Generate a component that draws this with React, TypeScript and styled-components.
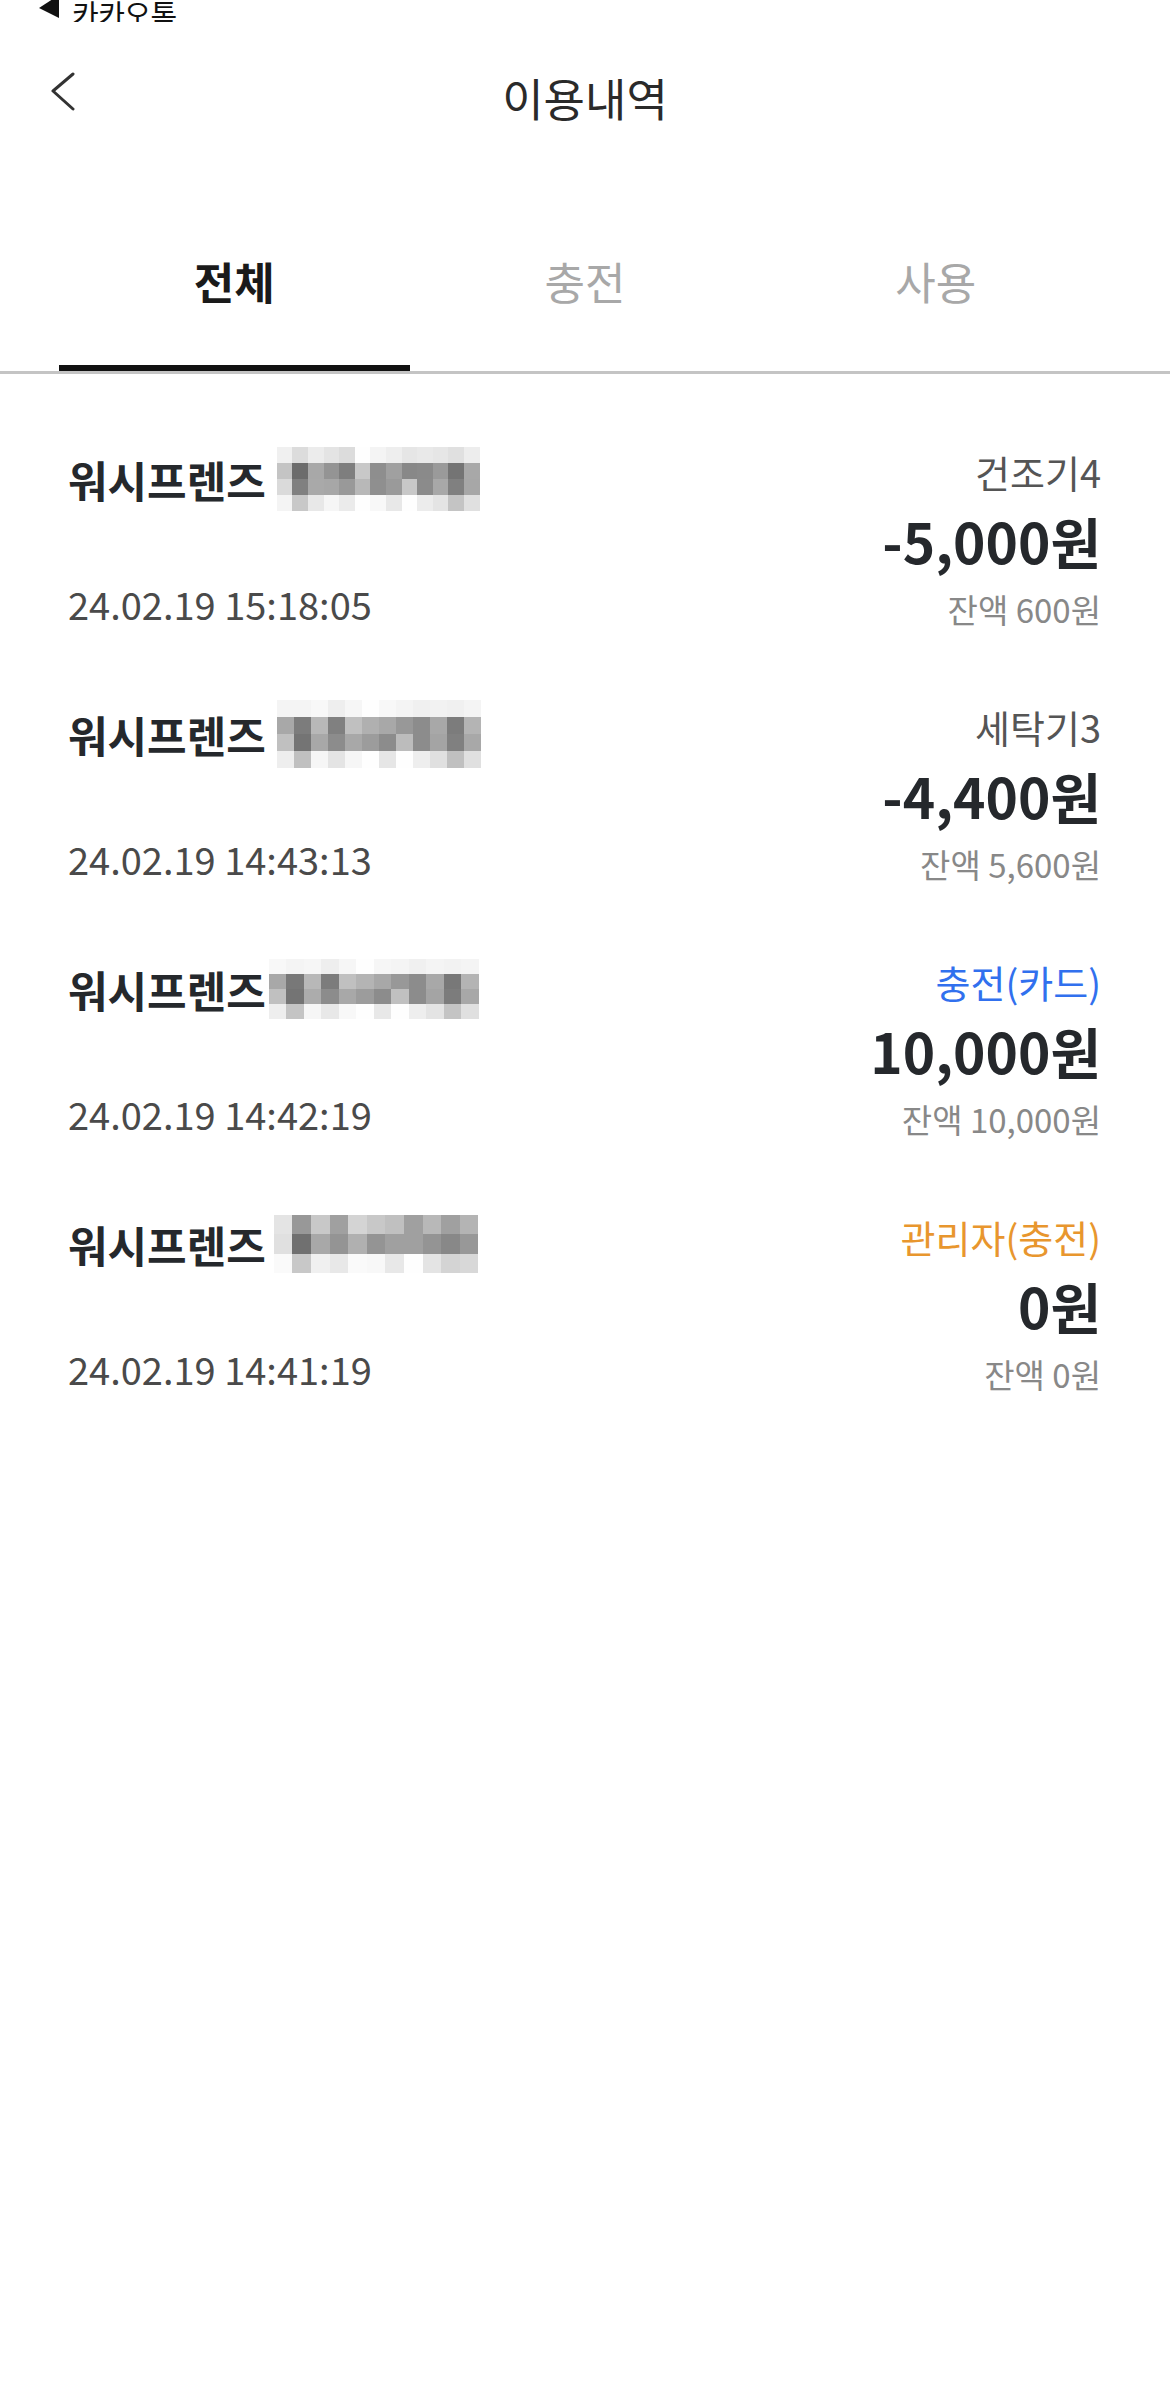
import React, { useState } from "react";
import styled, { createGlobalStyle } from "styled-components";

const GlobalStyle = createGlobalStyle`
  html, body {
    margin: 0;
    padding: 0;
    background: #fff;
  }
  body {
    font-family: "Noto Sans CJK KR", "Noto Sans", sans-serif;
    color: #222;
  }
`;

const Page = styled.div`
  width: 1170px;
  min-height: 2385px;
  background: #fff;
`;

const StatusBar = styled.div`
  height: 22px;
  display: flex;
  align-items: flex-end;
  gap: 12px;
  padding-left: 38px;
  overflow: hidden;
`;

const StatusText = styled.span`
  font-size: 29px;
  line-height: 18px;
  color: #111;
  letter-spacing: -0.5px;
`;

const NavBar = styled.div`
  height: 160px;
  display: grid;
  grid-template-columns: 1fr auto 1fr;
`;

const BackButton = styled.div`
  padding: 50px 0 0 50px;
`;

const Title = styled.h1`
  margin: 0 0 8px;
  align-self: center;
  font-size: 45px;
  line-height: 56px;
  font-weight: 400;
  color: #2a2a2a;
`;

const TabBar = styled.div`
  display: grid;
  grid-template-columns: repeat(3, 1fr);
  padding: 0 59px;
  border-bottom: 3px solid #c4c4c4;
`;

const Tab = styled.div<{ $active?: boolean }>`
  height: 112px;
  padding-top: 71px;
  text-align: center;
  font-size: 44px;
  line-height: 56px;
  font-weight: ${(p) => (p.$active ? 700 : 400)};
  color: ${(p) => (p.$active ? "#1a1a1a" : "#a8a8a8")};
  border-bottom: 6px solid ${(p) => (p.$active ? "#111" : "transparent")};
  cursor: pointer;
`;

const List = styled.div`
  padding-top: 76px;
`;

const Row = styled.div`
  height: 255px;
  display: flex;
  justify-content: space-between;
  padding: 0 69px 0 68px;
`;

const Left = styled.div`
  display: flex;
  flex-direction: column;
`;

const NameLine = styled.div`
  margin-top: 1px;
  height: 56px;
  display: flex;
  align-items: center;
`;

const Name = styled.span`
  font-size: 43px;
  line-height: 56px;
  font-weight: 700;
  color: #25282c;
`;

const PixelBlock = styled.div<{ $cols: number; $w: number; $h: number; $shift: number }>`
  display: grid;
  grid-template-columns: repeat(${(p) => p.$cols}, ${(p) => p.$w}px);
  grid-auto-rows: ${(p) => p.$h}px;
  margin-left: ${(p) => p.$shift}px;
  filter: blur(0.7px);
`;

const Cell = styled.div<{ $shade: string }>`
  background: #${(p) => p.$shade}${(p) => p.$shade}${(p) => p.$shade};
`;

const DateText = styled.div`
  margin-top: 75px;
  font-size: 38px;
  line-height: 44px;
  color: #4a4a4a;
`;

const Right = styled.div`
  display: flex;
  flex-direction: column;
  align-items: flex-end;
`;

const Label = styled.div<{ $tone: "gray" | "blue" | "orange" }>`
  font-size: 38px;
  line-height: 44px;
  color: ${(p) =>
    p.$tone === "blue" ? "#3170ee" : p.$tone === "orange" ? "#e8962e" : "#555"};
`;

const Amount = styled.div`
  margin-top: 14px;
  font-size: 55px;
  line-height: 64px;
  font-weight: 700;
  color: #25282c;
`;

const Balance = styled.div`
  margin-top: 17px;
  font-size: 33px;
  line-height: 40px;
  color: #888;
`;

type Mosaic = { cols: number; w: number; h: number; shift: number; rows: string[] };

type Item = {
  date: string;
  label: string;
  tone: "gray" | "blue" | "orange";
  amount: string;
  balance: string;
  mosaic: Mosaic;
};

const items: Item[] = [
  {
    date: "24.02.19 15:18:05",
    label: "건조기4",
    tone: "gray",
    amount: "-5,000원",
    balance: "잔액 600원",
    mosaic: {
      cols: 13,
      w: 15.6,
      h: 16,
      shift: 11,
      rows: [
        "f0 dc ec e4 dc fe f4 ee e6 e9 e6 e0 ed",
        "c4 6c a8 94 7e c8 8e a0 88 8a 9a 74 a8",
        "da 80 a9 a7 99 b8 8f 9a c8 8b a8 80 a7",
        "f4 c8 e8 f6 eb fe f8 e8 fe ec e4 c4 e0",
      ],
    },
  },
  {
    date: "24.02.19 14:43:13",
    label: "세탁기3",
    tone: "gray",
    amount: "-4,400원",
    balance: "잔액 5,600원",
    mosaic: {
      cols: 12,
      w: 17,
      h: 17,
      shift: 11,
      rows: [
        "f4 f4 f8 ee f6 fe f8 f4 f0 f2 f0 f4",
        "a8 7c b8 80 c0 b0 a8 98 8c a8 7c b4",
        "c0 74 a8 8c a8 9c 8c bc 8c a4 80 a8",
        "ee c0 f6 e4 f6 fe e6 fe ee e0 c0 e0",
      ],
    },
  },
  {
    date: "24.02.19 14:42:19",
    label: "충전(카드)",
    tone: "blue",
    amount: "10,000원",
    balance: "잔액 10,000원",
    mosaic: {
      cols: 12,
      w: 17.5,
      h: 15,
      shift: 3,
      rows: [
        "f8 f4 f6 ee f6 fe f6 f4 f0 f4 f2 f4",
        "a8 78 b8 7c c0 b4 a8 98 8c a8 78 b4",
        "c0 74 ac 8c a8 9c 8c c0 8c a4 7c a8",
        "ee c4 f6 e8 f8 fe e8 fe ee e4 c4 e0",
      ],
    },
  },
  {
    date: "24.02.19 14:41:19",
    label: "관리자(충전)",
    tone: "orange",
    amount: "0원",
    balance: "잔액 0원",
    mosaic: {
      cols: 11,
      w: 18.6,
      h: 19.5,
      shift: 8,
      rows: [
        "e4 98 c8 a0 d4 c8 c0 a0 b8 a0 b4",
        "e0 70 a8 94 b0 94 a0 a0 94 88 98",
        "fa c8 f0 e8 fa f8 e8 fe e4 d4 d8",
      ],
    },
  },
];

function ChevronLeft() {
  return (
    <svg width="26" height="40" viewBox="0 0 26 40">
      <polyline
        points="23,2 3,19 23,37"
        fill="none"
        stroke="#333"
        strokeWidth="3"
        strokeLinecap="round"
        strokeLinejoin="round"
      />
    </svg>
  );
}

function BackTriangle() {
  return (
    <svg width="22" height="22" viewBox="0 0 22 22">
      <polygon points="21,-5 1,8 21,18" fill="#111" />
    </svg>
  );
}

function Pixelated({ m }: { m: Mosaic }) {
  return (
    <PixelBlock $cols={m.cols} $w={m.w} $h={m.h} $shift={m.shift}>
      {m.rows.map((r, i) =>
        r.split(" ").map((s, j) => <Cell key={i + "-" + j} $shade={s} />)
      )}
    </PixelBlock>
  );
}

function App() {
  const [tab, setTab] = useState(0);
  const tabs = ["전체", "충전", "사용"];

  return (
    <Page>
      <GlobalStyle />
      <StatusBar>
        <BackTriangle />
        <StatusText>카카오톡</StatusText>
      </StatusBar>
      <NavBar>
        <BackButton>
          <ChevronLeft />
        </BackButton>
        <Title>이용내역</Title>
        <div />
      </NavBar>
      <TabBar>
        {tabs.map((t, i) => (
          <Tab key={t} $active={tab === i} onClick={() => setTab(i)}>
            {t}
          </Tab>
        ))}
      </TabBar>
      <List>
        {items.map((it) => (
          <Row key={it.date}>
            <Left>
              <NameLine>
                <Name>워시프렌즈</Name>
                <Pixelated m={it.mosaic} />
              </NameLine>
              <DateText>{it.date}</DateText>
            </Left>
            <Right>
              <Label $tone={it.tone}>{it.label}</Label>
              <Amount>{it.amount}</Amount>
              <Balance>{it.balance}</Balance>
            </Right>
          </Row>
        ))}
      </List>
    </Page>
  );
}

export default App;
